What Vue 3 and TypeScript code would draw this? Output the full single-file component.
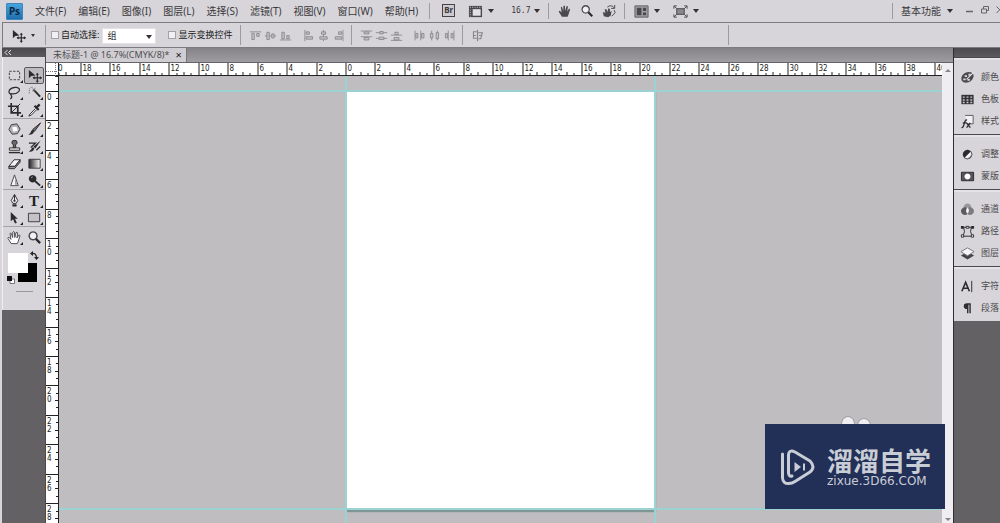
<script setup lang="ts">
import { computed, h, onBeforeUnmount, onMounted, ref } from 'vue'

interface Shape { d: string; f?: string; s?: string; w?: number; dash?: string }
type Art = Shape[]

const ink = '#2b2a2c'
const mid = '#858387'

const Glyph = (props: { art: Art; size?: number }) =>
  h('svg', { width: props.size ?? 16, height: props.size ?? 16, viewBox: '0 0 16 16', 'aria-hidden': 'true' },
    props.art.map(p => h('path', {
      d: p.d, fill: p.f ?? 'none', stroke: p.s ?? 'none',
      'stroke-width': p.w ?? 1, 'stroke-dasharray': p.dash,
    })))
Glyph.props = ['art', 'size']

const menus = ['文件(F)', '编辑(E)', '图像(I)', '图层(L)', '选择(S)', '滤镜(T)', '视图(V)', '窗口(W)', '帮助(H)']

const moveArt: Art = [
  { d: 'M2 2V11L4.500 8.500L9 8Z', f: ink },
  { d: 'M11 6V15M6.500 10.500H15.500', s: ink, w: 1.2 },
  { d: 'M11 5L9.300 7.300H12.700ZM11 16L9.300 13.700H12.700ZM6 10.500L8.200 8.800V12.200ZM16 10.500L13.800 8.800V12.200Z', f: ink },
]
const handBody = 'M4.500 14.500L1 9Q1 7.300 2.500 8L4.200 10L3.300 4Q3.600 2.500 4.700 3.700L6 8L6.200 2.200Q7 1 7.900 2.200L8.300 8L9.700 2.700Q10.900 1.700 11.300 3.200L10.600 8.500L12.500 5.500Q13.900 4.900 13.800 6.400L12 12L11 14.500Z'
const zoomArt: Art = [
  { d: 'M6.500 2A4.200 4.200 0 1 1 6.490 2Z', s: '#4a484c', w: 1.5, f: '#f2f0f4' },
  { d: 'M9.500 9.500L14 14', s: ink, w: 2.4 },
]

interface Tool { name: string; art: Art; more?: boolean; on?: boolean; letter?: string }
const toolGroups: Tool[][] = [
  [
    { name: '矩形选框', more: true, art: [{ d: 'M2.500 3.500H13.500V12.500H2.500Z', s: '#3c3a3e', dash: '2.5 1.5' }] },
    { name: '移动', on: true, art: moveArt },
    { name: '套索', more: true, art: [{ d: 'M5 10Q1 9 2.500 5.500Q5 2 10 2.500Q15 3.500 12.500 7Q9.500 10 5 9.500Q3 8.500 4.500 11Q6 13 3.500 15', s: ink, w: 1.3 }] },
    { name: '快速选择', more: true, art: [{ d: 'M2.500 9V4.500Q3 2 7 2.500', s: '#77757a', dash: '1.5 1' }, { d: 'M7 5L14 12.500', s: ink, w: 2 }, { d: 'M6 3.500L9 6.500M5.500 6.500L9 3.500', s: '#77757a' }] },
    { name: '裁剪', more: true, art: [{ d: 'M4.500 1V11.500H15M1 4.500H11.500V15', s: ink, w: 1.8 }, { d: 'M4 12L14 2', s: ink }] },
    { name: '吸管', more: true, art: [{ d: 'M9 7L3 13L2 15L4.500 14L10.500 8', s: ink, f: '#eeecef' }, { d: 'M8 4L12.500 8.500M10 6L13.500 2.500', s: ink, w: 2.4 }] },
  ],
  [
    { name: '修复画笔', more: true, art: [{ d: 'M4.500 3L10.500 2L14 7.500L11 12.500L5.500 13L2 8Z', s: '#39373b', f: '#b4b2b6' }, { d: 'M5.500 5.500L10 5L11.500 9L7 10.500Z', f: '#fff' }] },
    { name: '画笔', more: true, art: [{ d: 'M14.500 1L6 8L8 10Z', f: '#706e72', s: ink }, { d: 'M7.500 9.500Q7 14 1.500 13.500Q4 12 4.500 9.500Q6 7.500 7.500 9.500Z', f: ink }] },
    { name: '仿制图章', more: true, art: [{ d: 'M8 1.500A2.300 2.300 0 0 1 9 6L9.500 9H6.500L7 6A2.300 2.300 0 0 1 8 1.500Z', f: '#6b696d', s: ink }, { d: 'M2.500 9.500H13.500V12H2.500Z', s: ink, f: '#eee' }, { d: 'M2 14.500H14', s: ink, w: 1.5 }] },
    { name: '历史记录画笔', more: true, art: [{ d: 'M14.500 1.500L7 8L9 10Z', f: ink }, { d: 'M8 9Q7.500 14 2 13.500Q5 11 5.500 9Z', f: ink }, { d: 'M2 4.500H9L4 9M10 12L14 8', s: ink, w: 1.3 }] },
    { name: '橡皮擦', more: true, art: [{ d: 'M2 11L7.500 4H14L8.500 11Z', s: ink, f: '#f4f2f6' }, { d: 'M2 11V13.500H8L14 6.500V4L8.500 11H2Z', s: ink, f: '#99979b' }] },
    { name: '渐变', more: true, art: [{ d: 'M2 3.500H14V13H2Z', f: 'url(#ramp)', s: '#3c3a3e' }] },
    { name: '锐化', more: true, art: [{ d: 'M8 2L12 13.500H4Z', s: '#4a484c', f: '#f4f2f6' }, { d: 'M8.500 5L11 12.500H8.500Z', f: '#a19fa3' }] },
    { name: '减淡', more: true, art: [{ d: 'M6 2A4 4 0 1 1 5.990 2Z', f: ink }, { d: 'M8.500 8.500L14 13.500', s: ink, w: 2 }, { d: 'M4.500 5L6 4.200', s: '#bbb' }] },
  ],
  [
    { name: '钢笔', more: true, art: [{ d: 'M8 1.500L11.500 8L9.800 11H6.200L4.500 8Z', s: ink, f: '#f4f2f6' }, { d: 'M8 2V7.500', s: ink }, { d: 'M8 7A1.200 1.200 0 1 1 7.990 7ZM5.800 12H10.200V14.500H5.800Z', f: ink }] },
    { name: '横排文字', more: true, letter: 'T', art: [] },
    { name: '路径选择', more: true, art: [{ d: 'M4 2V12L6.500 9.800L8.500 14.500L10.500 13.500L8.500 9.200H11.500Z', f: ink }] },
    { name: '矩形', more: true, art: [{ d: 'M1.500 3.500H13.500V12.500H1.500Z', f: '#c4c2c6', s: '#3c3a3e' }] },
  ],
  [
    { name: '抓手', more: true, art: [{ d: handBody, f: '#fff', s: '#4a484c' }] },
    { name: '缩放', art: zoomArt },
  ],
]

interface Panel { name: string; art: Art }
const panelGroups: Panel[][] = [
  [
    { name: '颜色', art: [{ d: 'M9 2Q15 2 14.500 7Q13 13.500 6 13.500Q1 13 1.500 8Q3 2.500 9 2Z', f: '#4b494d' }, { d: 'M5 5.500H7.500V7.500H5ZM9 4H11.500V6H9ZM3.500 9H6V11H3.500ZM8 9.500H10.500V11.500H8Z', f: '#d8d6da' }, { d: 'M7 10L15 2', s: '#e3e1e5', w: 1.2 }] },
    { name: '色板', art: [{ d: 'M1.500 3H14.500V13H1.500Z', f: '#343236' }, { d: 'M3 5.500H14M3 8.500H14M3 11.200H14', s: '#cac8cc', w: 1.5, dash: '2 2' }] },
    { name: '样式', art: [{ d: 'M5.500 1.500H14V10.500H8', s: '#5b595d', f: '#f2f0f4' }, { d: 'M1.500 14.500Q3.500 15 4.500 10L5.500 7.500Q6 6 7.500 6.500M3 9.500H7M7 9.500L11 14.500M11 9.500L7 14.500', s: ink, w: 1.4 }] },
  ],
  [
    { name: '调整', art: [{ d: 'M8 3A5 5 0 1 1 7.990 3Z', f: '#2d2b2f' }, { d: 'M11.500 4.500A5 5 0 0 1 4.500 11.500Z', f: '#f2f0f4', s: '#555' }] },
    { name: '蒙版', art: [{ d: 'M1.500 3.500H14.500V12.500H1.500Z', f: '#565458', s: ink }, { d: 'M8 4.800A3.200 3.200 0 1 1 7.990 4.800Z', f: '#fff' }] },
  ],
  [
    { name: '通道', art: [{ d: 'M8 1.500A4.200 4.200 0 1 1 7.990 1.500Z', f: '#99979b' }, { d: 'M5.300 5.500A4.200 4.200 0 1 1 5.290 5.500Z', f: '#5c5a5e' }, { d: 'M10.700 5.500A4.200 4.200 0 1 1 10.690 5.500Z', f: '#7d7b7f' }, { d: 'M8 5.500Q11 9 8 12.500Q5 9 8 5.500Z', f: '#f5f3f7' }] },
    { name: '路径', art: [{ d: 'M2 3.500H14M4 4Q6 8 3 13H13Q10 8 12 4', s: ink }, { d: 'M1 2H4V5H1ZM12 2H15V5H12Z', f: ink }, { d: 'M1.500 11.500H4V14H1.500ZM12 11.500H14.500V14H12ZM6.500 2.500H9.500V4.500H6.500Z', s: ink, f: '#fff' }] },
    { name: '图层', art: [{ d: 'M1 10L8 6L15 10L8 14.500Z', f: '#454347' }, { d: 'M1 6L8 2L15 6L8 10.500Z', f: '#f7f5f9', s: '#78767a' }] },
  ],
  [
    { name: '字符', art: [{ d: 'M2 13L6 3.500L10 13M3.500 9.800H8.500', s: ink, w: 1.7 }, { d: 'M12.500 2V14', s: ink }] },
    { name: '段落', art: [{ d: 'M7.500 2.500H11.500V13H10V4H9V13H7.500V8.500Q4 8.500 4 5.500Q4 2.500 7.500 2.500Z', f: '#2f2d31' }] },
  ],
]

const alignGroups: { name: string; art: Art }[][] = [
  [
    { name: '顶对齐', art: [{ d: 'M1 3.500H15', s: mid }, { d: 'M3.500 5.500H6.500V13H3.500ZM9.500 5.500H12.500V9H9.500Z', s: mid, f: '#c2c0c4' }] },
    { name: '垂直居中', art: [{ d: 'M1 8.500H15', s: mid }, { d: 'M3.500 4H6.500V13H3.500ZM9.500 6H12.500V11H9.500Z', s: mid, f: '#c2c0c4' }] },
    { name: '底对齐', art: [{ d: 'M1 13.500H15', s: mid }, { d: 'M3.500 4H6.500V12H3.500ZM9.500 8H12.500V12H9.500Z', s: mid, f: '#c2c0c4' }] },
  ],
  [
    { name: '左对齐', art: [{ d: 'M3.500 1V15', s: mid }, { d: 'M5 3.500H9V6.500H5ZM5 9.500H13V12.500H5Z', s: mid, f: '#c2c0c4' }] },
    { name: '水平居中', art: [{ d: 'M8 1V15', s: mid }, { d: 'M5.500 3.500H10.500V6.500H5.500ZM3.500 9.500H12.500V12.500H3.500Z', s: mid, f: '#c2c0c4' }] },
    { name: '右对齐', art: [{ d: 'M13.500 1V15', s: mid }, { d: 'M8 3.500H12V6.500H8ZM4 9.500H12V12.500H4Z', s: mid, f: '#c2c0c4' }] },
  ],
  [
    { name: '按顶分布', art: [{ d: 'M1 2.500H15M1 9.500H15', s: mid }, { d: 'M5 3.500H11V6H5ZM5 10.500H11V13.500H5Z', s: mid, f: '#c2c0c4' }] },
    { name: '垂直居中分布', art: [{ d: 'M1 4.500H15M1 11.500H15', s: mid }, { d: 'M6 3H10V6H6ZM5 10H11V13H5Z', s: mid, f: '#c2c0c4' }] },
    { name: '按底分布', art: [{ d: 'M1 7.500H15M1 14H15', s: mid }, { d: 'M6 4H10V7H6ZM5 10.500H11V13.500H5Z', s: mid, f: '#c2c0c4' }] },
  ],
  [
    { name: '按左分布', art: [{ d: 'M2.500 2V14M9.500 2V14', s: mid }, { d: 'M3.500 5.500H6V11H3.500ZM10.500 5.500H13.500V11H10.500Z', s: mid, f: '#c2c0c4' }] },
    { name: '水平居中分布', art: [{ d: 'M4.500 2V14M11.500 2V14', s: mid }, { d: 'M3 5.500H6V11H3ZM10 4.500H13V12H10Z', s: mid, f: '#c2c0c4' }] },
    { name: '按右分布', art: [{ d: 'M6.500 2V14M13.500 2V14', s: mid }, { d: 'M3 5.500H5.500V11H3ZM10 5.500H12.500V11H10Z', s: mid, f: '#c2c0c4' }] },
  ],
  [{ name: '自动对齐图层', art: [{ d: 'M8 1V15', s: mid, w: 1.4 }, { d: 'M7 3.500H3V11.500H7M9 4.500H14L12 12H9M3 8H6M10 8H13', s: mid, w: 1.3 }] }],
]

const filmArt: Art = [{ d: 'M1 2H15V14H1Z', f: '#4b494d' }, { d: 'M5 5.500H13.500V12.500H5Z', f: '#e2e0e4' }, { d: 'M2 3.500H15M2.500 6V14', s: '#d6d4d8', dash: '1 1.5' }]
const handArt: Art = [{ d: handBody, f: '#4b494d' }]
const rotateArt: Art = [{ d: 'M2 14L1 9L4 10L3 6L5 6L6.500 9L7 5L9 5.500L9 9L11 8L10 13L7 15Z', f: '#4b494d' }, { d: 'M6 3.500Q11 0 14 4.500M14.500 1V5H10.500M14 7L15 10L11 14', s: '#4b494d', w: 1.1 }]
const arrangeArt: Art = [{ d: 'M1 2H15V14H1Z', f: '#a3a1a5', s: '#5a585c' }, { d: 'M3 4H8V12H3ZM9.500 4H13V7.500H9.500ZM9.500 9H13V12H9.500Z', f: '#4a484c' }]
const screenArt: Art = [{ d: 'M4 5H12V11H4Z', f: '#8a888c', s: '#454347' }, { d: 'M1 5V2H4M12 2H15V5M15 11V14H12M4 14H1V11M1.500 2.500L4 5M14.500 2.500L12 5M14.500 13.500L12 11M1.500 13.500L4 11', s: '#454347' }]

const autoSelect = ref(false)
const showTransform = ref(false)
const target = ref('组')

/* One document centimetre at 16.7% zoom */
const unit = 14.72
const pageHalf = 155

const view = ref({ w: window.innerWidth, h: window.innerHeight })
const measure = () => { view.value = { w: window.innerWidth, h: window.innerHeight } }
onMounted(() => window.addEventListener('resize', measure))
onBeforeUnmount(() => window.removeEventListener('resize', measure))

interface Tick { at: number; len: number }
const ticks = (from: number, to: number): Tick[] =>
  Array.from({ length: (to - from) * 2 + 1 }, (_, i) => {
    const v = from + i / 2
    return { at: Math.round(v * unit), len: v % 2 === 0 ? 13 : v % 1 === 0 ? 4 : 3 }
  })
const evens = (from: number, to: number): number[] =>
  Array.from({ length: Math.floor((to - from) / 2) + 1 }, (_, i) => from + i * 2)

const half = computed(() => (view.value.w - 116) / 2)
const first = computed(() => -2 * Math.ceil((half.value - pageHalf) / unit / 2))
const last = computed(() => Math.floor((half.value + pageHalf) / unit))
const bottom = computed(() => Math.floor((view.value.h - 91) / unit))

const across = computed(() => ticks(first.value, last.value))
const down = computed(() => ticks(-1, bottom.value))
const acrossLabels = computed(() => evens(first.value, last.value))
const downLabels = computed(() => evens(0, bottom.value))
</script>

<template>
  <div class="app">
    <svg class="defs" aria-hidden="true"><defs><linearGradient id="ramp"><stop offset="0" stop-color="#222" /><stop offset="1" stop-color="#fff" /></linearGradient></defs></svg>
    <header class="menubar">
      <span class="logo">Ps</span>
      <nav class="menus"><button v-for="m in menus" :key="m">{{ m }}</button></nav>
      <i class="rule" />
      <div class="appbar">
        <button class="bridge">Br</button>
        <button class="drop" aria-label="查看额外内容"><Glyph :art="filmArt" :size="15" /><i class="tri" /></button>
        <button class="drop zoomlevel">16.7<i class="tri" /></button>
      </div>
      <i class="rule" />
      <div class="quick">
        <button aria-label="抓手工具"><Glyph :art="handArt" :size="14" /></button>
        <button aria-label="缩放工具"><Glyph :art="zoomArt" :size="14" /></button>
        <button aria-label="旋转视图"><Glyph :art="rotateArt" :size="14" /></button>
      </div>
      <i class="rule" />
      <div class="appbar views">
        <button class="drop" aria-label="排列文档"><Glyph :art="arrangeArt" :size="15" /><i class="tri" /></button>
        <button class="drop" aria-label="屏幕模式"><Glyph :art="screenArt" :size="15" /><i class="tri" /></button>
      </div>
      <div class="end">
        <i class="rule" />
        <button class="drop workspace">基本功能<i class="tri" /></button>
        <div class="window">
          <button aria-label="最小化"><svg width="8" height="8"><path d="M0 5.500H7" stroke="#666468" stroke-width="1.500" /></svg></button>
          <button aria-label="还原"><svg width="8" height="8"><path d="M2.500 3V.5H7.500V4.500H5.500M.5 3H5.500V7H.5Z" fill="none" stroke="#666468" /></svg></button>
          <button aria-label="关闭"><svg width="8" height="8"><path d="M.5 .5L7 7M7 .5L.5 7" stroke="#666468" /></svg></button>
        </div>
      </div>
    </header>

    <section class="options">
      <button class="drop current" aria-label="移动工具"><Glyph :art="moveArt" :size="15" /><i class="tri small" /></button>
      <i class="rule" />
      <label class="check auto"><input v-model="autoSelect" type="checkbox">自动选择:</label>
      <div class="pick">
        <select v-model="target" aria-label="自动选择目标"><option>组</option><option>图层</option></select>
        <i class="tri" />
      </div>
      <label class="check"><input v-model="showTransform" type="checkbox">显示变换控件</label>
      <i class="rule lead" />
      <template v-for="(g, i) in alignGroups" :key="i">
        <div class="aligns"><button v-for="a in g" :key="a.name" :aria-label="a.name"><Glyph :art="a.art" :size="13" /></button></div>
        <i v-if="i === 1 || i === 3" class="rule" />
      </template>
      <i class="rule far" />
    </section>

    <div class="body">
      <aside class="toolbox">
        <div class="cap"><svg width="8" height="5"><path d="M3.500 0L1 2.500L3.500 5M7 0L4.500 2.500L7 5" fill="none" stroke="#e6e4e8" /></svg></div>
        <div class="tools">
          <div v-for="(g, i) in toolGroups" :key="i" class="toolgroup">
            <button v-for="t in g" :key="t.name" :class="{ on: t.on, more: t.more }" :aria-label="t.name">
              <span v-if="t.letter" class="letter">{{ t.letter }}</span>
              <Glyph v-else :art="t.art" :size="15" />
            </button>
          </div>
          <div class="swatches">
            <button class="back" aria-label="背景色" />
            <button class="front" aria-label="前景色" />
            <button class="swap" aria-label="切换颜色"><svg width="9" height="9"><path d="M2 2.500Q6.500 2 6.500 7" fill="none" stroke="#222" stroke-width="1.300" /><path d="M0 2.500L3 0V5ZM4 6H9L6.500 9Z" fill="#222" /></svg></button>
            <button class="reset" aria-label="默认颜色"><svg width="8" height="8"><path d="M3 3H7.500V7.500H3Z" fill="#fff" stroke="#777" /><path d="M0 0H5V5H0Z" fill="#111" /></svg></button>
          </div>
          <i class="maskline" />
        </div>
      </aside>

      <main class="doc">
        <div class="tabs"><div class="tab"><span>未标题-1 @ 16.7%(CMYK/8)*</span><button aria-label="关闭文档">×</button></div></div>
        <div class="stage">
          <div class="corner"><svg width="13" height="13"><path d="M0 8.500H13M9.500 0V13" stroke="#77757a" stroke-dasharray="1 1" /></svg></div>
          <svg class="ruler top" aria-hidden="true">
            <svg x="50%" overflow="visible">
              <path v-for="t in across" :key="t.at" :d="`M${t.at - pageHalf} 13v-${t.len}h1v${t.len}z`" />
              <text v-for="n in acrossLabels" :key="n" :x="Math.round(n * unit) - pageHalf + 2" y="8">{{ Math.abs(n) }}</text>
            </svg>
          </svg>
          <svg class="ruler side" aria-hidden="true">
            <path v-for="t in down" :key="t.at" :d="`M13 ${t.at + 15}h-${t.len}v1h${t.len}z`" />
            <template v-for="n in downLabels" :key="n">
              <text v-for="(c, k) in String(n)" :key="k" x="1" :y="Math.round(n * unit) + 24 + k * 8">{{ c }}</text>
            </template>
          </svg>
          <div class="canvas">
            <div class="page"><i class="guide left" /><i class="guide right" /></div>
            <i class="guide upper" /><i class="guide lower" />
            <i class="bump one" /><i class="bump two" />
          </div>
          <div class="scroll"><i class="up" /><i class="dn" /></div>
        </div>
      </main>

      <aside class="dock">
        <div class="cap" />
        <div v-for="(g, i) in panelGroups" :key="i" class="panelgroup">
          <button v-for="p in g" :key="p.name"><Glyph :art="p.art" :size="15" /><span>{{ p.name }}</span></button>
        </div>
      </aside>
    </div>

    <div class="brand">
      <svg width="36" height="38" viewBox="0 0 36 38" aria-hidden="true">
        <g fill="none" stroke="#c9cdd6" stroke-width="3" stroke-linecap="round" stroke-linejoin="round">
          <path d="M2.500 6V30Q3 36 9 35.500Q12 35.500 15 33.500L30 24Q36 19 30 13L15 4Q9 1 8.500 7V25Q9 29 12 28" />
        </g>
        <path d="M14.500 14V24L21 19Z" fill="#c9cdd6" /><path d="M24 15.500V22.500" stroke="#c9cdd6" stroke-width="2" />
      </svg>
      <div class="words"><strong>溜溜自学</strong><span>zixue.3D66.COM</span></div>
    </div>
  </div>
</template>

<style>
body { margin: 0; }
</style>

<style scoped>
.app {
  position: relative; display: flex; flex-direction: column; height: 100vh; overflow: hidden;
  background: #d7d5d9; color: #3a383c;
  font: 10px/14px "Noto Sans", "Noto Sans CJK SC", sans-serif;
}
.app * { box-sizing: border-box; }
.defs { position: absolute; width: 0; height: 0; }
button { display: flex; align-items: center; justify-content: center; padding: 0; border: 0; background: none; color: inherit; font: inherit; white-space: nowrap; }
svg { display: block; flex: none; }
.rule { flex: none; width: 1px; height: 16px; background: #9d9b9f; }
.tri { flex: none; width: 0; height: 0; border: 3px solid transparent; border-top: 4px solid #343236; border-bottom: 0; }
.tri.small { border-width: 2px; border-top-width: 3px; border-bottom: 0; }
.drop { gap: 5px; }

.menubar { display: flex; align-items: center; flex: none; height: 22px; padding-left: 6px; }
.logo { display: flex; align-items: center; justify-content: center; width: 17px; height: 17px; border: 1px solid #3a86bd; border-radius: 1px; background: linear-gradient(#48a5dc, #1e6eae); color: #0a2440; font-size: 10px; font-weight: 700; }
.menus { display: flex; gap: 12px; margin: 0 11px 0 12px; }
.appbar { display: flex; gap: 13px; margin: 0 8px 0 12px; }
.bridge { width: 13px; height: 13px; border: 1px solid #454347; background: #cccace; font-size: 8px; font-weight: 700; line-height: 10px; }
.zoomlevel { margin-left: 4px; font-family: "DejaVu Sans Mono", monospace; font-size: 8px; gap: 4px; }
.quick { display: flex; gap: 8px; margin: 0 8px 0 9px; }
.views { margin-left: 9px; }
.end { display: flex; align-items: center; margin-left: auto; }
.workspace { margin: 0 13px 0 8px; gap: 6px; }
.window { display: flex; gap: 7px; margin-right: -4px; padding-bottom: 3px; }

.options { display: flex; align-items: center; flex: none; height: 26px; margin-left: 2px; border: solid #7d7b7f; border-width: 1px 0 1px 1px; font-size: 9px; }
.options .rule { height: 20px; }
.current { width: 42px; padding-right: 2px; }
.check { display: flex; align-items: center; gap: 2px; color: #222; }
.check input { appearance: none; width: 8px; height: 8px; margin: 0; border: 1px solid #a3a1a5; background: #f1eff3; }
.check.auto { margin-left: 5px; }
.pick { position: relative; width: 54px; margin: 2px 12px 0 3px; }
.pick select { display: block; appearance: none; width: 100%; height: 16px; padding: 0 4px; border: 1px solid #e3e1e5; background: #fff; color: #222; font: inherit; }
.pick .tri { position: absolute; right: 4px; top: 7px; pointer-events: none; }
.lead { margin-left: 8px; }
.aligns { display: flex; gap: 2px; margin: 0 6px 0 8px; }
.aligns + .aligns { margin-left: 4px; }
.far { margin-left: 238px; }

.body { display: flex; flex: 1; min-height: 0; padding-left: 2px; }
.cap { height: 9px; padding: 2px; background: linear-gradient(#4b494d, #5c5a5e); }
.toolbox { flex: none; width: 44px; background: #636164; border-right: 1px solid #4c4a4e; }
.tools { display: flex; flex-direction: column; height: 253px; padding-top: 10px; background: #d7d5d9; border-left: 1px solid #f0eef2; }
.toolgroup { display: grid; grid-template-columns: 20px 20px; grid-auto-rows: 17px; padding-left: 1px; }
.toolgroup + .toolgroup { border-top: 1px solid #a5a3a7; padding-top: 2px; }
.toolgroup button { position: relative; }
.toolgroup button.on { border: 1px solid #59575b; border-radius: 2px; background: #bdbbbf; }
.toolgroup .more::after { content: ""; position: absolute; right: 1px; bottom: 1px; border: solid transparent; border-width: 0 0 3px 3px; border-bottom-color: #222; }
.letter { font: 700 15px/16px "Liberation Serif", serif; color: #222; }
.swatches { position: relative; height: 34px; margin: 5px 4px 0 3px; }
.swatches button { position: absolute; }
.front { left: 2px; top: 2px; width: 20px; height: 20px; background: #fff; }
.back { left: 12px; top: 12px; width: 19px; height: 19px; background: #000; }
.swap { right: 2px; top: 0; }
.reset { left: 1px; top: 25px; }
.maskline { width: 17px; height: 1px; margin: 6px 0 0 13px; background: #9a989c; }

.doc { display: flex; flex-direction: column; flex: 1; min-width: 0; }
.tabs { display: flex; flex: none; height: 15px; border-bottom: 1px solid #656367; background: linear-gradient(#858387, #9e9ca0); }
.tab { display: flex; align-items: center; gap: 6px; padding: 0 4px 0 7px; border-right: 1px solid #77757a; background: #cfcdd1; color: #4f4d51; font-size: 9px; }
.tab button { font-size: 11px; color: #222; line-height: 12px; }
.stage { flex: 1; min-height: 0; display: grid; grid-template: 13px 1fr / 13px 1fr 11px; }
.corner { background: #fff; border-right: 1px solid #222; border-bottom: 1px solid #222; }
.ruler { width: 100%; height: 100%; overflow: hidden; background: #fff; fill: #222; font: 8px "DejaVu Sans Condensed", "DejaVu Sans", sans-serif; }
.top { border-bottom: 1px solid #222; }
.side { grid-row: 2; border-right: 1px solid #222; }
.canvas { position: relative; grid-area: 2 / 2; display: flex; justify-content: center; overflow: hidden; background: #bfbdc0; }
.page { position: relative; width: 310px; height: 419px; margin-top: 15px; background: #fff; box-shadow: 0 2px 1px #7f9794; }
.guide { position: absolute; background: #9bd3d5; }
.left, .right { top: -15px; width: 2px; height: 100vh; }
.left { left: -1px; }
.right { right: 0; }
.upper, .lower { left: 0; right: 0; height: 2px; }
.upper { top: 14px; }
.lower { top: 432px; }
.bump { position: absolute; width: 14px; height: 16px; border: 1px solid #a3a1a5; border-radius: 50%; background: #f0eef1; }
.one { right: 87px; top: 340px; }
.two { right: 71px; top: 342px; }
.scroll { grid-area: 1 / 3 / 3 / 4; display: flex; flex-direction: column; align-items: center; justify-content: space-between; padding: 6px 0 2px; background: #efedf1; }
.up, .dn { border: 3px solid transparent; }
.up { border-top: 0; border-bottom-color: #858387; }
.dn { border-bottom: 0; border-top-color: #858387; }

.dock { flex: none; width: 47px; border-left: 1px solid #2f2d31; background: #636164; }
.panelgroup { padding: 8px 0 2px; border-top: 1px solid #4c4a4e; background: #d7d5d9; box-shadow: inset 0 2px #e4e2e6; font-size: 9px; }
.panelgroup button { gap: 6px; height: 22px; padding-left: 6px; color: #4b494d; }

.brand { position: absolute; right: 55px; bottom: 14px; display: flex; align-items: center; gap: 11px; width: 180px; height: 85px; padding-left: 15px; background: #222f56; color: #c9cdd6; }
.words { display: flex; flex-direction: column; }
.words strong { font: 700 26px/28px "Noto Sans CJK SC", sans-serif; }
.words span { font: 12px/14px "DejaVu Sans", sans-serif; }
</style>
